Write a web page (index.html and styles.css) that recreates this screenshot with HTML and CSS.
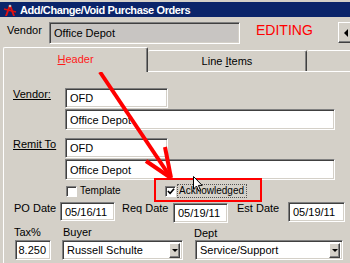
FILE: index.html
```html
<!DOCTYPE html>
<html>
<head>
<meta charset="utf-8">
<link rel="stylesheet" href="styles.css">
</head>
<body>
<div class="titlebar">
  <svg class="appicon" width="14" height="14" viewBox="0 0 14 14">
    <rect x="0" y="0" width="14" height="14" fill="#0a246a"/>
    <path d="M2 13 L6 2 L8 2 L12 13 L10 13 L7 5 L4 13 Z" fill="#e01010"/>
    <path d="M1 6 L13 9" stroke="#e01010" stroke-width="1.5"/>
    <circle cx="7" cy="3" r="1.3" fill="#c0c0c0"/>
  </svg>
  <span class="title">Add/Change/Void Purchase Orders</span>
</div>

<div class="toprow">
  <span class="toplabel">Vendor</span>
  <div class="field readonly wide">Office Depot</div>
  <span class="editing">EDITING</span>
  <div class="navbtn"><span class="tri-left"></span></div>
</div>

<div class="tabs">
  <div class="tab active"><span class="tabtext red"><u>H</u>eader</span></div>
  <div class="tab line"><span class="tabtext">Line <u>I</u>tems</span></div>
  <div class="tab more"></div>
</div>

<div class="panel">
  <div class="addr">
    <div class="lbl"><u>Vendor:</u></div>
    <div class="stack">
      <div class="field short">OFD</div>
      <div class="field long">Office Depot</div>
    </div>
  </div>
  <div class="addr remit">
    <div class="lbl"><u>Remit To</u></div>
    <div class="stack">
      <div class="field short">OFD</div>
      <div class="field long">Office Depot</div>
    </div>
  </div>
  <div class="checks">
    <div class="check first">
      <span class="box"></span>
      <span class="clabel">Template</span>
    </div>
    <div class="check">
      <span class="box"><svg width="9" height="9" viewBox="0 0 9 9"><path d="M1 4 L3.5 6.5 L8 1.5" fill="none" stroke="#000" stroke-width="1.8"/></svg></span>
      <span class="clabel focus">Acknowledged</span>
    </div>
  </div>
  <div class="dates">
    <span class="dlabel po">PO Date</span>
    <div class="field date">05/16/11</div>
    <span class="dlabel req">Req Date</span>
    <div class="field date down">05/19/11</div>
    <span class="dlabel est">Est Date</span>
    <div class="field date est-f">05/19/11</div>
  </div>
  <div class="bottom">
    <div class="col tax">
      <span class="blabel">Tax%</span>
      <div class="field taxf">8.250</div>
    </div>
    <div class="col buyer">
      <span class="blabel">Buyer</span>
      <div class="field combo buyerc"><span class="ctext">Russell Schulte</span><span class="cbtn"><span class="tri-down"></span></span></div>
    </div>
    <div class="col dept">
      <span class="blabel deptl">Dept</span>
      <div class="field combo deptc"><span class="ctext">Service/Support</span><span class="cbtn"><span class="tri-down"></span></span></div>
    </div>
  </div>
</div>

<div class="highlight"></div>
<svg class="arrow" width="350" height="263" viewBox="0 0 350 263">
  <line x1="100" y1="72" x2="169" y2="175" stroke="#ff0000" stroke-width="4"/>
  <line x1="171" y1="178" x2="165" y2="147" stroke="#ff0000" stroke-width="4"/>
  <line x1="171" y1="178" x2="146" y2="161" stroke="#ff0000" stroke-width="4"/>
</svg>
<svg class="cursor" width="11" height="17" viewBox="0 0 11 17">
  <path d="M0.5 0.5 L0.5 13 L3.5 10 L5.8 15.2 L7.6 14.4 L5.4 9.4 L9.2 9.4 Z" fill="#fff" stroke="#000" stroke-width="1"/>
</svg>
</body>
</html>
```
FILE: styles.css
```css
* { box-sizing: border-box; }
body {
  margin: 0;
  width: 350px;
  height: 263px;
  overflow: hidden;
  background: #d4d0c8;
  font-family: "Liberation Sans", Arial, sans-serif;
  font-size: 11px;
  color: #000;
  position: relative;
}
u { text-decoration: underline; }

.titlebar {
  margin-top: 2px;
  height: 15px;
  background: #0a246a;
  display: flex;
  align-items: center;
  padding-left: 3px;
  gap: 3px;
}
.appicon { flex-shrink: 0; }
.title {
  color: #fff;
  font-weight: bold;
  font-size: 11px;
  letter-spacing: -0.4px;
  white-space: nowrap;
}

.toprow {
  display: flex;
  align-items: flex-start;
  height: 29px;
  padding: 5px 0 0 7px;
}
.toplabel {
  width: 42px;
  margin-top: 2px;
  line-height: 13px;
  flex-shrink: 0;
}
.field {
  background: #fff;
  border-top: 1px solid #808080;
  border-left: 1px solid #808080;
  border-right: 1px solid #fff;
  border-bottom: 1px solid #fff;
  box-shadow: inset 1px 1px 0 #404040, inset -1px -1px 0 #d4d0c8;
  padding-left: 4px;
  display: flex;
  align-items: center;
  white-space: nowrap;
  flex-shrink: 0;
}
.readonly { background: #c8c5c2; }
.wide { width: 191px; height: 22px; }
.editing {
  color: #ff0000;
  font-size: 14px;
  line-height: 16px;
  margin: 0 0 0 16px;
  flex-shrink: 0;
}
.navbtn {
  margin-left: 25px;
  width: 16px;
  height: 21px;
  flex-shrink: 0;
  border-top: 1px solid #fff;
  border-left: 1px solid #fff;
  border-right: 1px solid #404040;
  border-bottom: 1px solid #404040;
  box-shadow: inset -1px -1px 0 #808080;
  display: flex;
  align-items: center;
  padding-left: 5px;
}
.tri-left {
  width: 0; height: 0;
  border-top: 4px solid transparent;
  border-bottom: 4px solid transparent;
  border-right: 4px solid #000;
}

.tabs {
  display: flex;
  align-items: flex-end;
  height: 25px;
  padding-left: 3px;
  position: relative;
  z-index: 1;
}
.tab {
  background: #d4d0c8;
  border-top: 1px solid #fff;
  border-right: 1px solid #404040;
  box-shadow: inset -1px 0 0 #808080;
  border-radius: 2px 2px 0 0;
  display: flex;
  align-items: center;
  justify-content: center;
  flex-shrink: 0;
}
.tab.active {
  width: 145px;
  height: 25px;
  margin-bottom: -1px;
  border-left: 1px solid #fff;
  padding-bottom: 3px;
}
.tab.line { width: 159px; height: 21px; }
.tab.more { width: 50px; height: 21px; }
.tabtext { font-size: 11px; }
.red { color: #ff1a1a; }

.panel {
  margin-left: 3px;
  border-left: 1px solid #fff;
  border-top: 1px solid #fff;
  padding: 16px 0 0 9px;
  height: 200px;
}
.addr { display: flex; }
.addr.remit { margin-top: 8px; }
.lbl { width: 52px; line-height: 13px; flex-shrink: 0; }
.stack { display: flex; flex-direction: column; gap: 1px; }
.short { width: 103px; height: 20px; }
.long { width: 270px; height: 21px; }

.checks {
  display: flex;
  align-items: center;
  height: 22px;
  padding-left: 53px;
}
.check { display: flex; align-items: center; }
.check.first { width: 99px; }
.box {
  width: 11px;
  height: 11px;
  background: #fff;
  border-top: 1px solid #808080;
  border-left: 1px solid #808080;
  border-right: 1px solid #fff;
  border-bottom: 1px solid #fff;
  box-shadow: inset 1px 1px 0 #404040;
  display: flex;
  align-items: center;
  justify-content: center;
  padding: 1px 0 0 1px;
}
.box svg { display: block; }
.clabel { font-size: 10px; margin-left: 3px; line-height: 12px; }
.clabel.focus {
  margin-left: 1px;
  border: 1px dotted #555;
  padding: 0 2px 0 1px;
}

.dates {
  display: flex;
  align-items: flex-start;
  height: 20px;
}
.dlabel { line-height: 13px; flex-shrink: 0; }
.dlabel.po { margin-left: 1px; width: 46px; }
.dlabel.req { margin-left: 7px; width: 51px; }
.dlabel.est { margin-left: 9px; width: 51px; }
.date { width: 55px; height: 19px; }
.date.down { margin-top: 1px; height: 20px; }
.date.est-f { width: 57px; height: 20px; }

.bottom {
  display: grid;
  grid-template-columns: 48px 132px 160px;
  margin-top: 4px;
  margin-left: 1px;
}
.col { display: flex; flex-direction: column; }
.blabel { line-height: 13px; height: 13px; }
.buyer .blabel { padding-left: 1px; }
.deptl { padding-top: 1px; }
.taxf {
  width: 36px;
  height: 20px;
  margin: 1px 0 0 1px;
  justify-content: flex-end;
  padding-right: 4px;
}
.combo {
  height: 20px;
  margin-top: 1px;
  justify-content: space-between;
  padding-right: 2px;
}
.buyerc { width: 121px; }
.deptc { width: 148px; margin-left: 1px; }
.cbtn {
  width: 11px;
  height: 15px;
  background: #d4d0c8;
  border-top: 1px solid #fff;
  border-left: 1px solid #fff;
  border-right: 1px solid #404040;
  border-bottom: 1px solid #404040;
  box-shadow: inset -1px -1px 0 #808080;
  display: flex;
  align-items: center;
  justify-content: center;
}
.tri-down {
  width: 0; height: 0;
  border-left: 3px solid transparent;
  border-right: 3px solid transparent;
  border-top: 3px solid #000;
}

.highlight {
  position: absolute;
  left: 154px;
  top: 178px;
  width: 108px;
  height: 24px;
  border: 2px solid #ff0000;
}
.arrow { position: absolute; left: 0; top: 0; pointer-events: none; }
.cursor { position: absolute; left: 193px; top: 176px; }
```
